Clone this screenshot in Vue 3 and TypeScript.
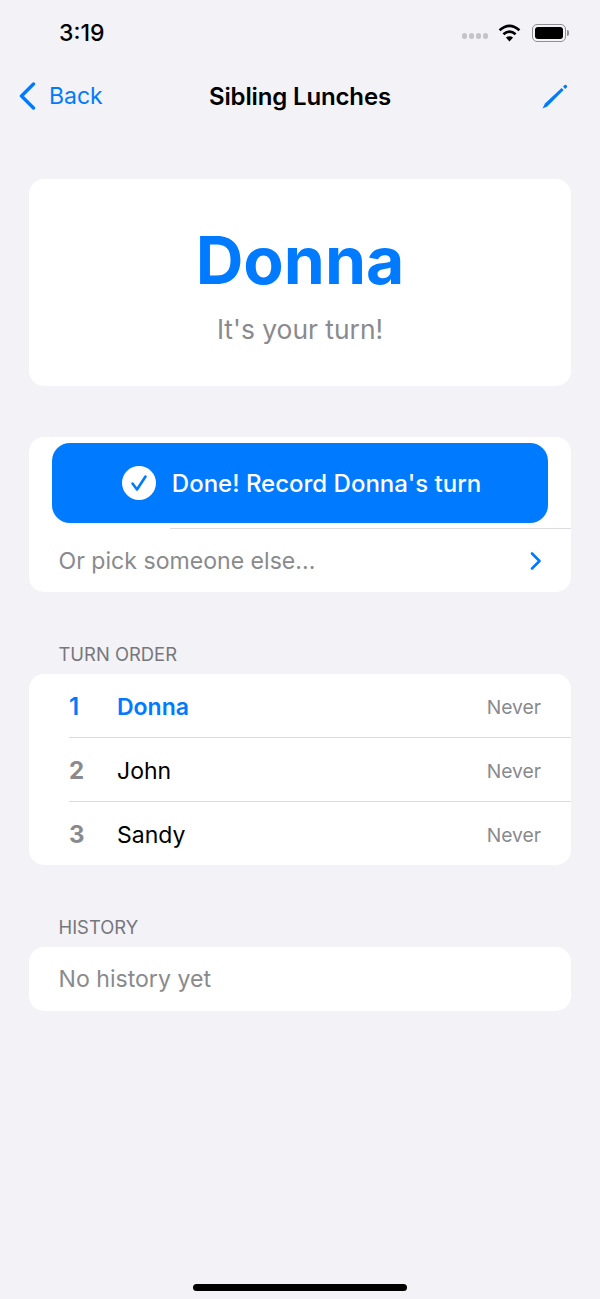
<template>
  <div class="screen">
    <div class="status">
      <span class="time">3:19</span>
      <div class="status-right">
        <div class="dots"><i></i><i></i><i></i><i></i></div>
        <svg class="wifi" width="23" height="18" viewBox="0 0 23 18">
          <path d="M11.5 17.6 L7.9 13.6 Q11.5 10.8 15.1 13.6 Z" fill="#000" />
          <path d="M5.4 10.2 Q11.5 5.2 17.6 10.2" fill="none" stroke="#000" stroke-width="2.7" />
          <path d="M1.6 6.2 Q11.5 -2.4 21.4 6.2" fill="none" stroke="#000" stroke-width="2.7" />
        </svg>
        <div class="battery"><div class="battery-fill"></div></div>
        <div class="battery-cap"></div>
      </div>
    </div>

    <div class="navbar">
      <a class="back">
        <svg width="18" height="28" viewBox="0 0 18 28">
          <path d="M15.5 2 L3.5 14 L15.5 26" fill="none" stroke="#007aff" stroke-width="3.4" stroke-linecap="round" stroke-linejoin="round" />
        </svg>
        <span>Back</span>
      </a>
      <span class="title">Sibling Lunches</span>
      <svg class="pencil" width="28" height="28" viewBox="0 0 28 28">
        <path d="M1.5 26.5 L4 21.6 L20.6 6 L22.6 8 L6.2 24.4 Z" fill="#007aff" />
        <path d="M22 4.6 L23.4 3.2 Q24.6 2.3 25.7 3.3 Q26.6 4.4 25.7 5.6 L24.2 6.9 Z" fill="#007aff" />
      </svg>
    </div>

    <div class="card hero">
      <div class="hero-name">Donna</div>
      <div class="hero-sub">It's your turn!</div>
    </div>

    <div class="card action">
      <button class="done" type="button">
        <svg width="34" height="34" viewBox="0 0 34 34">
          <circle cx="17" cy="17" r="17" fill="#fff" />
          <path d="M10.5 17.5 L15 23.5 L23.5 10.5" fill="none" stroke="#007aff" stroke-width="2.6" stroke-linecap="round" stroke-linejoin="round" />
        </svg>
        <span>Done! Record Donna's turn</span>
      </button>
      <div class="pick">
        <span>Or pick someone else...</span>
        <svg width="14" height="20" viewBox="0 0 14 20">
          <path d="M3 2.5 L10.5 10 L3 17.5" fill="none" stroke="#007aff" stroke-width="2.6" stroke-linecap="round" stroke-linejoin="round" />
        </svg>
      </div>
    </div>

    <div class="section-label">TURN ORDER</div>
    <div class="card order">
      <div v-for="(s, i) in siblings" :key="s" class="row" :class="{ current: i === 0 }">
        <span class="num">{{ i + 1 }}</span>
        <span class="name">{{ s }}</span>
        <span class="when">Never</span>
      </div>
    </div>

    <div class="section-label history-label">HISTORY</div>
    <div class="card empty">No history yet</div>

    <div class="home-bar"></div>
  </div>
</template>

<script setup lang="ts">
const siblings: string[] = ['Donna', 'John', 'Sandy']
</script>

<style>
html, body {
  margin: 0;
  background: #f2f2f7;
}
</style>

<style scoped>
* {
  box-sizing: border-box;
}

.screen {
  position: relative;
  height: 1299px;
  background: #f2f2f7;
  font-family: Inter, "Liberation Sans", sans-serif;
  color: #000;
  overflow: hidden;
}

.status {
  display: flex;
  justify-content: space-between;
  align-items: center;
  height: 66px;
  padding: 0 31px 0 59px;
}

.time {
  font-size: 23px;
  font-weight: 500;
}

.status-right {
  display: flex;
  align-items: center;
}

.dots {
  display: flex;
  gap: 1.5px;
  margin-right: 10px;
  margin-top: 6px;
}

.dots i {
  width: 5.5px;
  height: 5.5px;
  border-radius: 50%;
  background: #c4c4c8;
}

.wifi {
  margin-right: 11px;
}

.battery {
  width: 34px;
  height: 18px;
  padding: 2px;
  border: 1px solid #8e8e93;
  border-radius: 5px;
}

.battery-fill {
  width: 100%;
  height: 100%;
  background: #000;
  border-radius: 3px;
}

.battery-cap {
  width: 2px;
  height: 6px;
  margin-left: 1px;
  background: #8e8e93;
  border-radius: 0 2px 2px 0;
}

.navbar {
  display: grid;
  grid-template-columns: 1fr auto 1fr;
  align-items: center;
  height: 60px;
  padding: 0 31px;
}

.back {
  display: flex;
  align-items: center;
  gap: 13px;
  margin-left: -13px;
  color: #007aff;
  font-size: 23px;
}

.title {
  font-size: 24px;
  font-weight: 600;
  letter-spacing: -0.15px;
}

.pencil {
  justify-self: end;
}

.card {
  margin: 0 29px;
  background: #fff;
  border-radius: 15px;
}

.hero {
  height: 207px;
  margin-top: 53px;
  text-align: center;
  padding-top: 41px;
}

.hero-name {
  font-size: 66px;
  font-weight: 700;
  line-height: 80px;
  color: #007aff;
}

.hero-sub {
  margin-top: 12px;
  font-size: 26.4px;
  line-height: 34px;
  color: #8a8a8e;
}

.action {
  height: 155px;
  margin-top: 51px;
  padding-top: 6px;
}

.done {
  display: flex;
  align-items: center;
  justify-content: center;
  gap: 16px;
  width: 496px;
  height: 80px;
  margin-left: 23px;
  padding: 0 0 0 3px;
  border: 0;
  border-radius: 18px;
  background: #007aff;
  color: #fff;
  font-family: inherit;
  font-size: 24px;
  font-weight: 500;
}

.pick {
  display: flex;
  justify-content: space-between;
  align-items: center;
  height: 64px;
  margin-top: 5px;
  margin-left: 29.5px;
  padding-right: 28px;
  padding-top: 2px;
  font-size: 23.1px;
  color: #8a8a8e;
  position: relative;
}

.pick::before {
  content: "";
  position: absolute;
  top: 0;
  left: 111.5px;
  right: 0;
  height: 1px;
  background: #dcdce0;
}

.section-label {
  margin: 50px 0 8px 58.5px;
  font-size: 18.4px;
  line-height: 24px;
  color: #77777c;
}

.history-label {
  margin-top: 50px;
}

.order {
  overflow: hidden;
}

.row {
  display: flex;
  align-items: center;
  height: 64px;
  margin-left: 40px;
  padding-right: 30px;
  padding-top: 2px;
  border-bottom: 1px solid #dcdce0;
  font-size: 23px;
}

.row:last-child {
  height: 63px;
  border-bottom: 0;
}

.num {
  width: 48px;
  font-size: 24px;
  font-weight: 700;
  color: #8a8a8e;
}

.name {
  flex: 1;
}

.when {
  font-size: 19.3px;
  color: #8a8a8e;
}

.current .num,
.current .name {
  color: #007aff;
  font-weight: 600;
}

.empty {
  height: 64px;
  padding-left: 29.5px;
  display: flex;
  align-items: center;
  font-size: 23.1px;
  color: #8a8a8e;
}

.home-bar {
  position: absolute;
  left: 193px;
  bottom: 8px;
  width: 214px;
  height: 7px;
  border-radius: 4px;
  background: #000;
}
</style>
